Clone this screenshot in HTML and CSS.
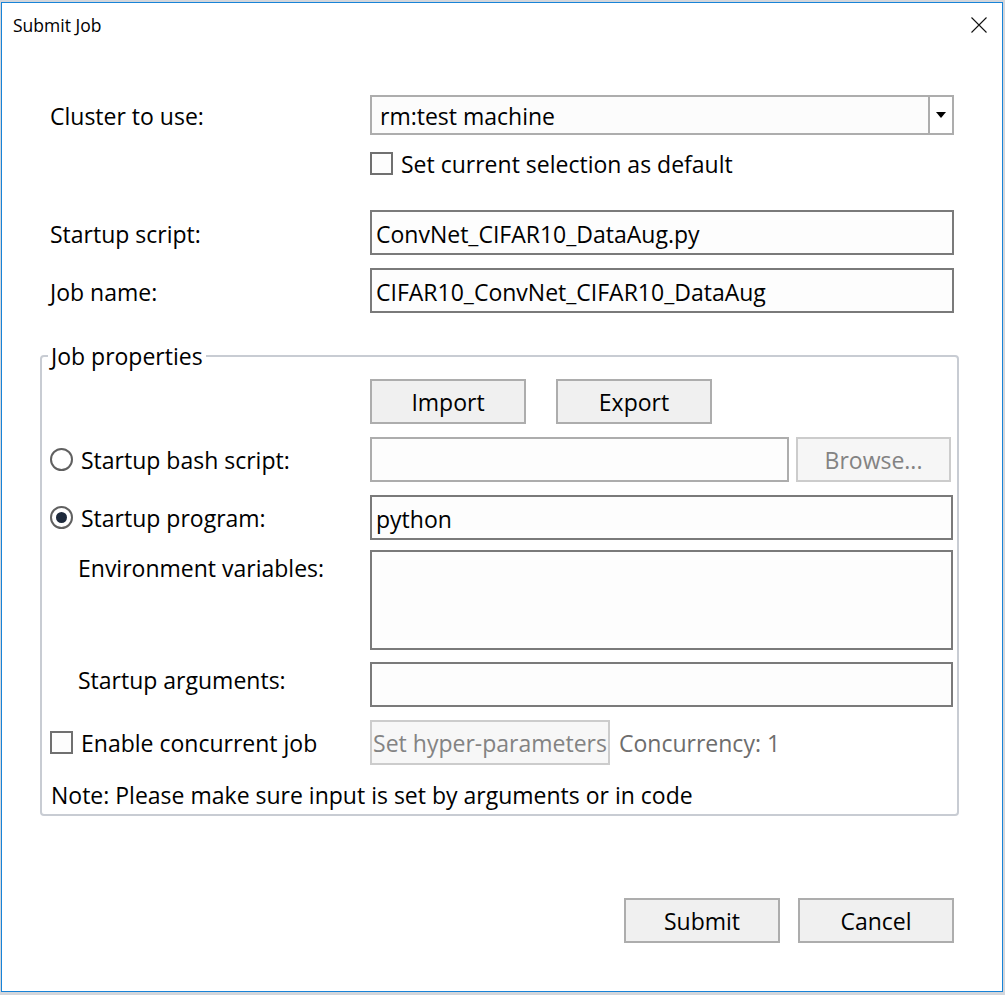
FILE: index.html
```html
<!DOCTYPE html>
<html>
<head>
<meta charset="utf-8">
<title>Submit Job</title>
<link rel="stylesheet" href="styles.css">
</head>
<body>
<div class="window">
  <div class="titlebar">
    <span class="title">Submit Job</span>
    <span class="close">
      <svg width="16" height="16" viewBox="0 0 16 16"><path d="M0.5 0.5 L15.5 15.5 M15.5 0.5 L0.5 15.5" stroke="#111" stroke-width="1.1" fill="none"/></svg>
    </span>
  </div>
  <div class="content">
    <div class="row row-combo">
      <div class="label">Cluster to use:</div>
      <div class="combo">
        <span class="combo-text">rm:test machine</span>
        <span class="combo-btn"><svg width="10" height="6" viewBox="0 0 10 6"><path d="M0 0 H10 L5 6 Z" fill="#000"/></svg></span>
      </div>
    </div>
    <div class="row row-default">
      <div class="label"></div>
      <div class="check"><span class="box"></span><span>Set current selection as default</span></div>
    </div>
    <div class="row row-script">
      <div class="label">Startup script:</div>
      <div class="input">ConvNet_CIFAR10_DataAug.py</div>
    </div>
    <div class="row row-name">
      <div class="label">Job name:</div>
      <div class="input">CIFAR10_ConvNet_CIFAR10_DataAug</div>
    </div>

    <fieldset class="group">
      <legend>Job properties</legend>
      <div class="grow grow-io">
        <div class="glabel"></div>
        <div class="io">
          <div class="btn btn-io">Import</div>
          <div class="btn btn-io">Export</div>
        </div>
      </div>
      <div class="grow grow-bash">
        <div class="glabel"><span class="radio"></span><span>Startup bash script:</span></div>
        <div class="bash">
          <div class="input input-disabled"></div>
          <div class="btn btn-disabled btn-browse">Browse...</div>
        </div>
      </div>
      <div class="grow grow-prog">
        <div class="glabel"><span class="radio radio-on"><span class="dot"></span></span><span>Startup program:</span></div>
        <div class="input">python</div>
      </div>
      <div class="grow grow-env">
        <div class="glabel glabel-indent glabel-top">Environment variables:</div>
        <div class="input textarea"></div>
      </div>
      <div class="grow grow-args">
        <div class="glabel glabel-indent glabel-top">Startup arguments:</div>
        <div class="input"></div>
      </div>
      <div class="grow grow-conc">
        <div class="glabel"><span class="box"></span><span>Enable concurrent job</span></div>
        <div class="conc">
          <div class="btn btn-disabled btn-hyper">Set hyper-parameters</div>
          <span class="concurrency">Concurrency: 1</span>
        </div>
      </div>
      <div class="note">Note: Please make sure input is set by arguments or in code</div>
    </fieldset>

    <div class="footer">
      <div class="btn btn-foot">Submit</div>
      <div class="btn btn-foot">Cancel</div>
    </div>
  </div>
</div>
</body>
</html>
```

FILE: styles.css
```css
html, body {
  margin: 0;
  padding: 0;
}
body {
  background: #d3d6db;
  font-family: "Open Sans", "Noto Sans", sans-serif;
  font-size: 23px;
  color: #000;
  width: 1005px;
  height: 995px;
  overflow: hidden;
}
.window {
  margin: 2px 0 0 1px;
  width: 1000px;
  height: 988px;
  border: 1px solid #1883d7;
  background: #fff;
  display: flex;
  flex-direction: column;
}
.titlebar {
  height: 44px;
  display: flex;
  align-items: center;
  justify-content: space-between;
  padding: 0 15px 0 11px;
}
.title {
  font-size: 17.5px;
}
.close {
  display: flex;
  width: 16px;
  height: 16px;
}
.content {
  padding: 0 48px;
  display: flex;
  flex-direction: column;
}
.row {
  display: flex;
  align-items: center;
}
.label {
  width: 320px;
  flex: none;
  line-height: 30px;
  padding-top: 2px;
}
.row-combo { margin-top: 48px; height: 40px; }
.row-default { margin-top: 17px; height: 23px; }
.row-script { margin-top: 35px; height: 45px; }
.row-name { margin-top: 13px; height: 45px; }

.combo {
  flex: 1;
  height: 40px;
  box-sizing: border-box;
  border: 2px solid #adadad;
  background: #fcfcfc;
  display: flex;
  align-items: center;
}
.combo-text {
  flex: 1;
  padding-left: 8px;
  padding-top: 2px;
}
.combo-btn {
  width: 22px;
  height: 100%;
  border-left: 2px solid #adadad;
  background: #fff;
  display: flex;
  align-items: center;
  justify-content: center;
}
.check {
  display: flex;
  align-items: center;
  gap: 8px;
}
.box {
  width: 23px;
  height: 23px;
  box-sizing: border-box;
  border: 2px solid #707070;
  background: #fdfdfd;
  flex: none;
}
.input {
  flex: 1;
  height: 45px;
  box-sizing: border-box;
  border: 2px solid #7a7a7a;
  background: #fdfdfd;
  padding-left: 4px;
  padding-top: 2px;
  display: flex;
  align-items: center;
  white-space: nowrap;
}
.input-disabled {
  border-color: #adadad;
}
.textarea {
  height: 100px;
}

.group {
  margin: 27px 0 0 -10px;
  padding: 0 4px 0 8px;
  width: 919px;
  box-sizing: border-box;
  border: 2px solid #c8ccd3;
  border-radius: 4px;
  height: 476px;
}
.group legend {
  margin-left: -2px;
  padding: 0 3px;
  line-height: 32px;
}
.grow {
  display: flex;
  align-items: center;
  height: 45px;
}
.glabel {
  width: 320px;
  flex: none;
  display: flex;
  align-items: center;
  gap: 8px;
  line-height: 30px;
}
.glabel-indent {
  padding-left: 28px;
  box-sizing: border-box;
}
.glabel-top {
  align-self: flex-start;
  padding-top: 3px;
}
.grow-io { margin-top: 7px; }
.grow-bash { margin-top: 13px; }
.grow-prog { margin-top: 13px; }
.grow-env { margin-top: 10px; height: 100px; }
.grow-args { margin-top: 12px; }
.grow-conc { margin-top: 13px; }
.radio {
  width: 23px;
  height: 23px;
  box-sizing: border-box;
  border: 2px solid #606060;
  border-radius: 50%;
  background: #fff;
  flex: none;
  display: flex;
  align-items: center;
  justify-content: center;
}
.dot {
  width: 11px;
  height: 11px;
  border-radius: 50%;
  background: #1e2a3c;
}
.io {
  display: flex;
  gap: 30px;
}
.btn {
  box-sizing: border-box;
  border: 2px solid #adadad;
  background: #f0f0f0;
  height: 45px;
  display: flex;
  align-items: center;
  justify-content: center;
  white-space: nowrap;
}
.btn-io {
  width: 156px;
}
.bash {
  flex: 1;
  display: flex;
  gap: 7px;
  padding-right: 2px;
}
.btn-disabled {
  border-color: #cccccc;
  background: #f6f6f6;
  color: #838383;
}
.btn-browse {
  width: 155px;
}
.conc {
  display: flex;
  align-items: center;
  gap: 9px;
}
.btn-hyper {
  width: 240px;
  background: #f7f7f7;
}
.concurrency {
  color: #6d6d6d;
}
.note {
  margin-top: 15px;
  line-height: 30px;
  padding-left: 1px;
}
.footer {
  display: flex;
  justify-content: flex-end;
  gap: 18px;
  margin-top: 82px;
}
.btn-foot {
  width: 156px;
}
```
